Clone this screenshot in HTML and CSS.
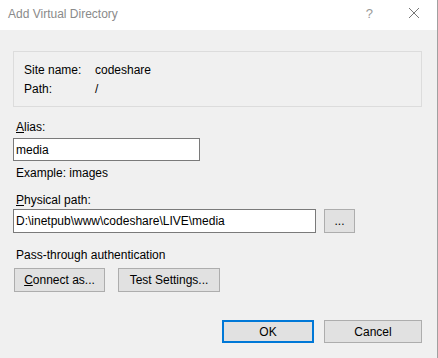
FILE: index.html
```html
<html>

<head>
  <title>Add Virtual Directory</title>
  <link rel="stylesheet" href="styles.css">
</head>

<body>
  <div class="dialog">
    <div class="titlebar">
      <span class="title">Add Virtual Directory</span>
      <span class="help">?</span>
      <svg class="close" width="12" height="12" viewBox="0 0 12 12">
        <path d="M1 1L11 11M11 1L1 11" stroke="#777" stroke-width="1" fill="none" />
      </svg>
    </div>

    <div class="content">
      <div class="groupbox">
        <div class="info-row"><span class="info-label">Site name:</span><span>codeshare</span></div>
        <div class="info-row"><span class="info-label">Path:</span><span>/</span></div>
      </div>

      <label class="field-label alias-label" for="alias"><u>A</u>lias:</label>
      <input class="textbox alias-box" type="text" id="alias" value="media">
      <div class="hint">Example: images</div>

      <label class="field-label path-label" for="physpath"><u>P</u>hysical path:</label>
      <div class="path-row">
        <input class="textbox path-box" type="text" id="physpath" value="D:\inetpub\www\codeshare\LIVE\media">
        <button class="btn browse-btn">...</button>
      </div>

      <div class="auth-label">Pass-through authentication</div>
      <div class="auth-row">
        <button class="btn connect-btn"><u>C</u>onnect as...</button>
        <button class="btn test-btn">Test Settings...</button>
      </div>

      <div class="footer">
        <button class="btn ok-btn">OK</button>
        <button class="btn cancel-btn">Cancel</button>
      </div>
    </div>
  </div>
</body>

</html>
```

FILE: styles.css
```css
body {
  margin: 0;
  font-family: "Liberation Sans", Arial, sans-serif;
  font-size: 12px;
  color: #000;
}

.dialog {
  width: 438px;
  height: 358px;
  box-sizing: border-box;
  background-color: #f0f0f0;
  border-right: 1px solid #a0a0a0;
  display: flex;
  flex-direction: column;
}

.titlebar {
  height: 30px;
  background-color: #fff;
  display: flex;
  align-items: center;
  padding-left: 8px;
  color: #8a8a8a;
  flex-shrink: 0;
}

.title {
  flex: 1;
  position: relative;
  top: -1px;
}

.help {
  font-size: 13px;
  margin-right: 35px;
  position: relative;
  top: -2px;
  color: #999;
}

.close {
  margin-right: 17px;
  position: relative;
  top: -2px;
}

.content {
  padding: 21px 15px 0 13px;
  display: flex;
  flex-direction: column;
}

.groupbox {
  border: 1px solid #dcdcdc;
  padding: 9px 10px 8px 10px;
  height: 56px;
  box-sizing: border-box;
}

.info-row {
  display: flex;
  line-height: 19px;
}

.info-label {
  width: 71px;
}

.field-label,
.hint,
.auth-label {
  display: block;
  line-height: 16px;
  padding-left: 3px;
}

.alias-label {
  margin-top: 12px;
}

.textbox {
  font-family: "Liberation Sans", Arial, sans-serif;
  font-size: 12px;
  border: 1px solid #7a7a7a;
  background-color: #fff;
  height: 23px;
  box-sizing: border-box;
  padding: 0 2px;
  margin: 3px 0 0 0;
  outline: none;
}

.alias-box {
  width: 187px;
}

.hint {
  margin-top: 4px;
}

.path-label {
  margin-top: 11px;
}

.path-row {
  display: flex;
  gap: 8px;
  margin-top: 1px;
}

.path-box {
  width: 303px;
  height: 24px;
  margin-top: 0;
}

.btn {
  font-family: "Liberation Sans", Arial, sans-serif;
  font-size: 12px;
  color: #000;
  background-color: #e1e1e1;
  border: 1px solid #adadad;
  height: 24px;
  box-sizing: border-box;
  padding: 0;
}

.browse-btn {
  width: 31px;
}

.auth-label {
  margin-top: 14px;
}

.auth-row {
  display: flex;
  gap: 13px;
  margin-top: 5px;
  padding-left: 1px;
}

.connect-btn {
  width: 91px;
}

.test-btn {
  width: 102px;
}

.footer {
  display: flex;
  justify-content: flex-end;
  gap: 10px;
  margin-top: 28px;
}

.ok-btn {
  width: 92px;
  height: 23px;
  border: 2px solid #0078d7;
}

.cancel-btn {
  width: 98px;
  height: 23px;
}
```
